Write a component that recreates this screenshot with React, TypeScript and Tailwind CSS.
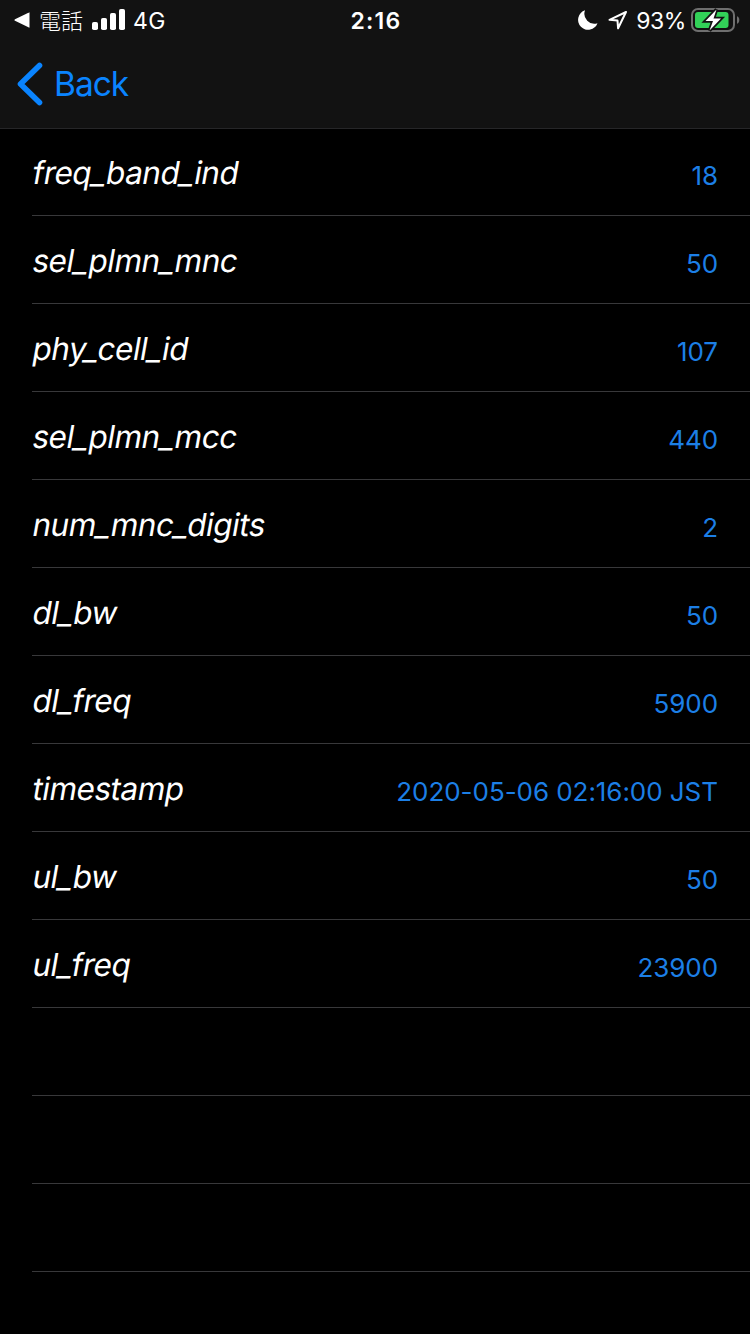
import React from 'react';

interface CellField {
  name: string;
  value: string;
}

const fields: CellField[] = [
  { name: 'freq_band_ind', value: '18' },
  { name: 'sel_plmn_mnc', value: '50' },
  { name: 'phy_cell_id', value: '107' },
  { name: 'sel_plmn_mcc', value: '440' },
  { name: 'num_mnc_digits', value: '2' },
  { name: 'dl_bw', value: '50' },
  { name: 'dl_freq', value: '5900' },
  { name: 'timestamp', value: '2020-05-06 02:16:00 JST' },
  { name: 'ul_bw', value: '50' },
  { name: 'ul_freq', value: '23900' },
];

const EMPTY_ROWS = 3;

const SignalBars: React.FC = () => (
  <svg className="-mt-px ml-[9px] h-[21px] w-[33px]" viewBox="0 0 33 21" fill="white">
    <rect x="0" y="13" width="6" height="8" rx="1.8" />
    <rect x="9" y="9" width="6" height="12" rx="1.8" />
    <rect x="18" y="4" width="6" height="17" rx="1.8" />
    <rect x="27" y="0" width="6" height="21" rx="1.8" />
  </svg>
);

const Battery: React.FC = () => (
  <svg className="ml-[5px] h-6 w-[49px]" viewBox="0 0 49 24" fill="none">
    <rect x="1" y="1" width="42" height="22" rx="6" stroke="#6f6f6f" strokeWidth="2" />
    <path d="M46 8.2c1.7.6 2.3 2 2.3 3.8s-.6 3.2-2.3 3.8z" fill="#6f6f6f" />
    <rect x="4" y="4" width="33.5" height="16" rx="3" fill="#32d158" />
    <path
      d="M25.5 1.5 14.5 13H22L18.5 22.5 30 10.5H22.5z"
      fill="white"
      stroke="#121212"
      strokeWidth="3.5"
      paintOrder="stroke"
    />
  </svg>
);

const StatusBar: React.FC = () => (
  <div className="flex h-10 items-center text-[23px] text-white">
    <div className="flex flex-1 items-center pl-[14px]">
      <svg className="h-4 w-4" viewBox="0 0 16 16" fill="white">
        <path d="M15.5.8v14.4q0 .6-.6.4L1 8.8Q-.2 8 1 7.2L14.9.4q.6-.2.6.4z" />
      </svg>
      <span className="mt-px ml-[9px] text-[22px] leading-10 font-light">電話</span>
      <SignalBars />
      <span className="mt-0.5 ml-[8px] tracking-[0.3px]">4G</span>
    </div>
    <span className="mt-0.5 mr-px -ml-px text-[23px] font-semibold tracking-[1.2px]">2:16</span>
    <div className="flex flex-1 items-center justify-end pr-[10px]">
      <svg className="h-5 w-5" viewBox="0 0 20 20" fill="white">
        <path d="M7 .3A10 10 0 1 0 19.5 13.2 10 10 0 0 1 7 .3z" />
      </svg>
      <svg className="ml-[10px] h-5 w-5" viewBox="0 0 20 20" fill="none">
        <path d="M18 2 1.5 9.8l8 .8.6 7.7z" stroke="white" strokeWidth="2" strokeLinejoin="round" />
      </svg>
      <span className="mt-0.5 ml-[8px] tracking-[-0.4px]">93%</span>
      <Battery />
    </div>
  </div>
);

const NavBar: React.FC = () => (
  <div className="flex h-[88px] items-center pl-[17px] text-[#0a84ff]">
    <svg className="h-11 w-[27px]" viewBox="0 0 27 44" fill="none">
      <path
        d="M22.5 3.5 3.5 22l19 18.5"
        stroke="currentColor"
        strokeWidth="5.6"
        strokeLinecap="round"
        strokeLinejoin="round"
      />
    </svg>
    <span className="ml-[10px] text-[33.5px] tracking-[-1px]">Back</span>
  </div>
);

const FieldRow: React.FC<{ field?: CellField }> = ({ field }) => (
  <div className="ml-8 flex h-[88px] items-center justify-between border-b border-[#38383a] pr-8">
    {field && (
      <>
        <span className="mt-[3px] ml-px -skew-x-[10deg] text-[31.5px] tracking-[-0.5px] text-white">
          {field.name}
        </span>
        <span className="mt-2 text-[26px] tracking-[-0.05px] text-[#1c7fe6]">{field.value}</span>
      </>
    )}
  </div>
);

const App: React.FC = () => {
  return (
    <div className="h-[1334px] w-[750px] overflow-hidden bg-black font-[Inter,'Noto_Sans_CJK_JP',sans-serif]">
      <header className="h-[129px] border-b border-[#262628] bg-[#121212]">
        <StatusBar />
        <NavBar />
      </header>
      <main className="-mt-px">
        {fields.map((field) => (
          <FieldRow key={field.name} field={field} />
        ))}
        {Array.from({ length: EMPTY_ROWS }, (_, i) => (
          <FieldRow key={i} />
        ))}
      </main>
    </div>
  );
};

export default App;
